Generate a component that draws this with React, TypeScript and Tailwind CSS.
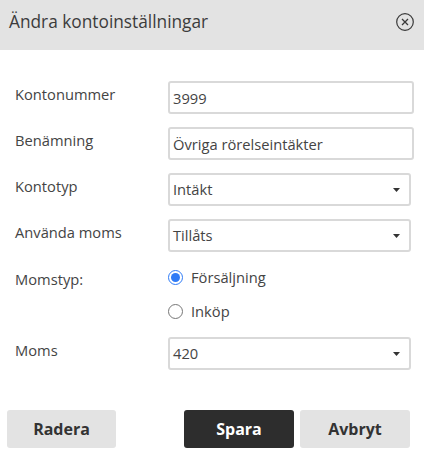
import React from "react";

const font = "font-['Open_Sans',sans-serif]";

const Caret = () => (
  <svg className="w-[7px] h-[4px] text-[#333333]" viewBox="0 0 7 4" aria-hidden="true">
    <path fill="currentColor" d="M0 0h7L3.5 4z" />
  </svg>
);

const SelectBox = ({ value }: { value: string }) => (
  <div className="flex h-[33px] w-[243px] items-center justify-between rounded-[3px] border-2 border-[#d9d9d9] bg-white pl-[3px] pr-[9px]">
    <span className="text-[14.7px] text-[#444444]">{value}</span>
    <Caret />
  </div>
);

const TextBox = ({ value }: { value: string }) => (
  <input
    readOnly
    value={value}
    className="h-[33px] w-[246px] rounded-[3px] border-2 border-[#d9d9d9] bg-white pl-[3px] text-[14.7px] text-[#444444] outline-none"
  />
);

const Row = ({ label, children }: { label: string; children: React.ReactNode }) => (
  <div className="flex items-start">
    <label className="w-[168px] pt-[2px] pl-[15px] text-[14.7px] leading-[22px] text-[#444444]">{label}</label>
    {children}
  </div>
);

const App = () => {
  return (
    <main className={`${font} h-[465px] w-[424px] overflow-hidden bg-white`}>
      <header className="flex h-[50px] items-center justify-between bg-[#e3e3e3] pb-[6px] pl-[9px] pr-[10px]">
        <h1 className="text-[17.3px] font-normal text-[#3c3c3c]">Ändra kontoinställningar</h1>
        <svg className="h-[18px] w-[18px] text-[#3a3a3a]" viewBox="0 0 18 18" fill="none" stroke="currentColor" aria-hidden="true">
          <circle cx="9" cy="9" r="8.3" strokeWidth="1.2" />
          <path d="M6 6l6 6M12 6l-6 6" strokeWidth="1.3" />
        </svg>
      </header>

      <form className="flex flex-col pt-[31px]">
        <div className="flex flex-col gap-[13px]">
          <Row label="Kontonummer"><TextBox value="3999" /></Row>
          <Row label="Benämning"><TextBox value="Övriga rörelseintäkter" /></Row>
          <Row label="Kontotyp"><SelectBox value="Intäkt" /></Row>
          <Row label="Använda moms"><SelectBox value="Tillåts" /></Row>
        </div>

        <div className="mt-[14px] flex items-start">
          <span className="w-[168px] pl-[15px] pt-[2px] text-[14.7px] leading-[22px] text-[#444444]">Momstyp:</span>
          <div className="flex flex-col gap-[12px]">
            <label className="flex h-[22px] items-center gap-[8px] text-[14.7px] text-[#444444]">
              <input type="radio" name="momstyp" defaultChecked className="m-0 h-[15px] w-[15px] accent-[#2f7bf6]" />
              Försäljning
            </label>
            <label className="flex h-[22px] items-center gap-[8px] text-[14.7px] text-[#444444]">
              <input type="radio" name="momstyp" className="m-0 h-[15px] w-[15px] accent-[#2f7bf6]" />
              Inköp
            </label>
          </div>
        </div>

        <div className="mt-[15px]">
          <Row label="Moms"><SelectBox value="420" /></Row>
        </div>

        <div className="mt-[40px] flex pl-[7px]">
          <button type="button" className="h-[38px] w-[109px] rounded-[3px] bg-[#e3e3e3] text-[16px] font-bold text-[#333333]">Radera</button>
          <button type="button" className="ml-[68px] h-[38px] w-[110px] rounded-[3px] bg-[#2d2d2d] text-[16px] font-bold text-white">Spara</button>
          <button type="button" className="ml-[6px] h-[38px] w-[110px] rounded-[3px] bg-[#e3e3e3] text-[16px] font-bold text-[#333333]">Avbryt</button>
        </div>
      </form>
    </main>
  );
};

export default App;
